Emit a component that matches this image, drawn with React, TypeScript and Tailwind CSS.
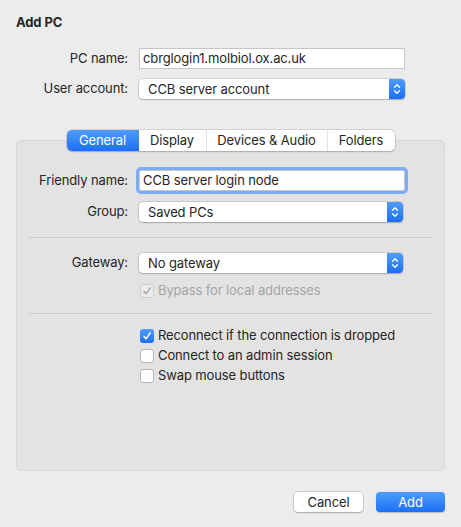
import React from "react";

const font = "font-['Inter','Liberation_Sans',sans-serif]";

function Stepper() {
  return (
    <div className="flex w-[16px] items-center justify-center rounded-r-[4px] bg-gradient-to-b from-[#4f9cfb] to-[#1a6ff5]">
      <svg width="8" height="12" viewBox="0 0 8 12" fill="none" stroke="white" strokeWidth="1.3" strokeLinecap="round" strokeLinejoin="round">
        <path d="M1.5 4.3 L4 1.8 L6.5 4.3" />
        <path d="M1.5 7.7 L4 10.2 L6.5 7.7" />
      </svg>
    </div>
  );
}

function Select({ value, wide }: { value: string; wide?: boolean }) {
  return (
    <div
      className={`flex h-[20px] rounded-[4px] bg-white shadow-[0_0_0_0.5px_rgba(0,0,0,0.22),0_1px_1.5px_rgba(0,0,0,0.18)] ${wide ? "w-[266px]" : "w-[264px]"}`}
    >
      <div className="flex-1 pl-[9px] leading-[20px]">{value}</div>
      <Stepper />
    </div>
  );
}

function Row({ label, children }: { label: string; children: React.ReactNode }) {
  return (
    <div className="flex items-center">
      <div className="w-[112px] text-right">{label}</div>
      <div className="ml-[11px]">{children}</div>
    </div>
  );
}

function Check({ checked, disabled, label }: { checked?: boolean; disabled?: boolean; label: string }) {
  let box = "border border-[#b5b5b5] bg-white";
  if (checked && !disabled) box = "bg-gradient-to-b from-[#4f9cfb] to-[#1a6ff5]";
  if (disabled) box = "border border-[#cfcfcf] bg-[#ebebeb]";
  return (
    <div className="flex h-[16px] items-center pl-[123px]">
      <div className={`flex h-[14px] w-[14px] items-center justify-center rounded-[3px] ${box}`}>
        {checked && (
          <svg width="10" height="10" viewBox="0 0 10 10" fill="none" stroke={disabled ? "#a8a8a8" : "white"} strokeWidth="1.5" strokeLinecap="round" strokeLinejoin="round">
            <path d="M2 5.4 L4.1 7.8 L8.2 1.8" />
          </svg>
        )}
      </div>
      <span className={`ml-[4px] ${disabled ? "text-[#a6a6a6]" : ""}`}>{label}</span>
    </div>
  );
}

const TABS = [
  { name: "General", w: "w-[72px]" },
  { name: "Display", w: "w-[67px]" },
  { name: "Devices & Audio", w: "w-[121px]" },
  { name: "Folders", w: "w-[68px]" },
];

export default function App() {
  return (
    <div className={`h-[527px] w-[461px] bg-[#ececec] px-4 pt-[14px] text-[13px] tracking-[-0.12px] text-[#262626] ${font}`}>
      <div className="leading-[16px] font-bold">Add PC</div>

      <div className="mt-[18px]">
        <Row label="PC name:">
          <div className="h-[21px] w-[266px] border border-[#c6c6c6] bg-white pl-[3px] leading-[19px]">
            cbrglogin1.molbiol.ox.ac.uk
          </div>
        </Row>
      </div>
      <div className="mt-[10px]">
        <Row label="User account:">
          <Select value="CCB server account" wide />
        </Row>
      </div>

      <div className="mt-[41px] h-[331px] rounded-[5px] border border-[#d6d6d6] bg-[#e3e3e3]">
        <div className="-mt-[11px] flex justify-center">
          <div className="flex h-[21px] overflow-hidden rounded-[5px] bg-white shadow-[0_0_0_0.5px_rgba(0,0,0,0.22),0_1px_1.5px_rgba(0,0,0,0.15)]">
            {TABS.map((t, i) => (
              <div
                key={t.name}
                className={`${t.w} text-center leading-[21px] ${
                  i === 0
                    ? "bg-gradient-to-b from-[#4f9cfb] to-[#1a6ff5] text-white"
                    : "border-l border-[#e2e2e2]"
                } ${i === 1 ? "border-l-0" : ""}`}
              >
                {t.name}
              </div>
            ))}
          </div>
        </div>

        <div className="mt-[19px]">
          <div className="flex items-center">
            <div className="w-[111px] text-right">Friendly name:</div>
            <div className="ml-[11px] h-[21px] w-[266px] rounded-[2px] border border-[#c6c6c6] bg-white pl-[3px] leading-[19px] shadow-[0_0_0_3px_rgba(80,150,245,0.7)]">
              CCB server login node
            </div>
          </div>
        </div>
        <div className="mt-[11px] flex items-center">
          <div className="w-[111px] text-right">Group:</div>
          <div className="ml-[11px]">
            <Select value="Saved PCs" />
          </div>
        </div>

        <div className="mx-[12px] mt-[15px] h-px bg-[#cbcbcb]" />

        <div className="mt-[15px] flex items-center">
          <div className="w-[111px] text-right">Gateway:</div>
          <div className="ml-[11px]">
            <Select value="No gateway" />
          </div>
        </div>

        <div className="mt-[10px]">
          <Check checked disabled label="Bypass for local addresses" />
        </div>

        <div className="mx-[12px] mt-[14px] h-px bg-[#cbcbcb]" />

        <div className="mt-[14px] flex flex-col gap-[4px]">
          <Check checked label="Reconnect if the connection is dropped" />
          <Check label="Connect to an admin session" />
          <Check label="Swap mouse buttons" />
        </div>
      </div>

      <div className="mt-[21px] flex justify-end gap-[13px]">
        <button className="h-[20px] w-[69px] rounded-[4px] bg-white leading-[20px] shadow-[0_0_0_0.5px_rgba(0,0,0,0.25),0_1px_1.5px_rgba(0,0,0,0.18)]">
          Cancel
        </button>
        <button className="h-[20px] w-[69px] rounded-[4px] bg-gradient-to-b from-[#4f9cfb] to-[#1a6ff5] leading-[20px] text-white shadow-[0_0.5px_1px_rgba(0,0,0,0.2)]">
          Add
        </button>
      </div>
    </div>
  );
}
